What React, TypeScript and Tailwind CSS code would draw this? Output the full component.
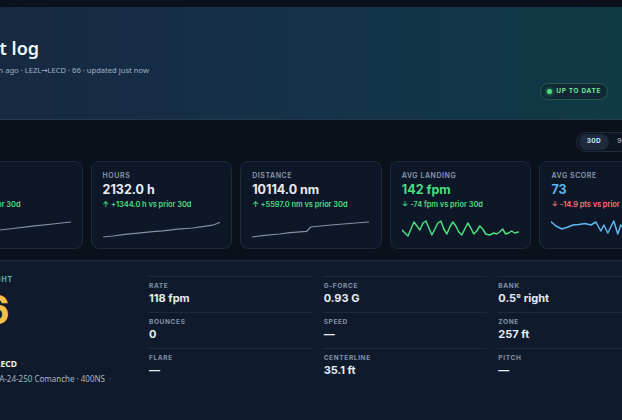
import React from "react";

type Stat = {
  label: string;
  value: string;
  delta: string;
  valueColor: string;
  deltaColor: string;
  spark: string;
  sparkColor: string;
  sparkWidth: number;
};

const stats: Stat[] = [
  {
    label: "FLIGHTS",
    value: "412",
    delta: "↑ +58 vs prior 30d",
    valueColor: "text-[#e8edf4]",
    deltaColor: "text-[#4ade80]",
    spark: "M0 18.3 L15 17 L30 15.5 L47 13 L60 11.5 L80 9.2 L100 7 L118 5",
    sparkColor: "#8091a8",
    sparkWidth: 1.2,
  },
  {
    label: "HOURS",
    value: "2132.0 h",
    delta: "↑ +1344.0 h vs prior 30d",
    valueColor: "text-[#e8edf4]",
    deltaColor: "text-[#4ade80]",
    spark: "M0 20 L10 19 L20 17.6 L35 16.2 L50 14.6 L60 13.8 L75 12.2 L90 11 L100 9.6 L110 8.2 L117 5.5",
    sparkColor: "#8091a8",
    sparkWidth: 1.2,
  },
  {
    label: "DISTANCE",
    value: "10114.0 nm",
    delta: "↑ +5597.0 nm vs prior 30d",
    valueColor: "text-[#e8edf4]",
    deltaColor: "text-[#4ade80]",
    spark: "M0 20 L10 18.7 L28 17 L38 15.7 L55 14.3 L57 12 L59 10 L79 8 L117 5",
    sparkColor: "#8091a8",
    sparkWidth: 1.2,
  },
  {
    label: "AVG LANDING",
    value: "142 fpm",
    delta: "↓ -74 fpm vs prior 30d",
    valueColor: "text-[#4ade80]",
    deltaColor: "text-[#4ade80]",
    spark:
      "M0 13 L3 16 L6 19 L9 12 L12 5 L15 9 L18 13 L21 6 L24 4 L27 11 L30 18 L33 12 L36 6 L39 4 L42 12 L45 17 L48 10 L51 5 L54 9 L57 15 L60 18 L63 12 L66 6 L69 11 L72 17 L75 14 L78 9 L81 12 L84 17 L88 18 L92 16 L95 17 L98 15 L101 12 L104 17 L107 16 L110 14 L113 16 L117 15",
    sparkColor: "#4ade80",
    sparkWidth: 1.5,
  },
  {
    label: "AVG SCORE",
    value: "73",
    delta: "↓ -14.9 pts vs prior 30d",
    valueColor: "text-[#5cb8f0]",
    deltaColor: "text-[#f87171]",
    spark:
      "M0 4.7 L5 9 L11 12 L17 10 L22 8 L28 7.5 L34 6.5 L40 8 L45 5 L50 14 L53 8 L57 16 L60 10 L63 4 L67 17 L70 8 L74 12 L78 6 L82 15 L86 9 L90 13 L95 7 L100 14 L105 10 L110 12 L117 9",
    sparkColor: "#5cb8f0",
    sparkWidth: 1.5,
  },
];

const metrics = [
  { label: "RATE", value: "118 fpm" },
  { label: "G-FORCE", value: "0.93 G" },
  { label: "BANK", value: "0.5° right" },
  { label: "BOUNCES", value: "0" },
  { label: "SPEED", value: "—" },
  { label: "ZONE", value: "257 ft" },
  { label: "FLARE", value: "—" },
  { label: "CENTERLINE", value: "35.1 ft" },
  { label: "PITCH", value: "—" },
];

const ranges = ["30D", "90D", "ALL"];

const StatCard = ({ stat }: { stat: Stat }) => (
  <div className="h-[88px] rounded-lg border border-[#1d2a3b] bg-[#0e1727] px-[11px] pt-[9px]">
    <div className="text-[7px] font-semibold leading-[10px] tracking-[0.08em] text-[#8b9ab0]">
      {stat.label}
    </div>
    <div className={`text-[12.5px] font-bold leading-[18px] ${stat.valueColor}`}>
      {stat.value}
    </div>
    <div className={`text-[7.5px] font-semibold leading-[11px] tracking-[-0.01em] ${stat.deltaColor}`}>
      {stat.delta}
    </div>
    <svg
      className="mt-[7px] block h-[22px] w-full"
      viewBox="0 0 118 22"
      preserveAspectRatio="none"
      fill="none"
    >
      <path
        d={stat.spark}
        stroke={stat.sparkColor}
        strokeWidth={stat.sparkWidth}
        strokeLinejoin="round"
        strokeLinecap="round"
        vectorEffect="non-scaling-stroke"
      />
    </svg>
  </div>
);

export default function App() {
  return (
    <div className="h-[420px] w-[622px] overflow-hidden bg-[#0b111b] font-['Inter',sans-serif]">
      <div className="-ml-[83px] w-[788px] pt-[7px]">
        {/* hero */}
        <div className="flex h-[113px] justify-between border-b border-[#26394f] bg-gradient-to-r from-[#16273f] via-[#143249] to-[#0f3b45] px-6 pt-[29px] pb-[19px]">
          <div className="ml-[16px] font-['Noto_Sans','DejaVu_Sans',sans-serif]">
            <h1 className="text-[18px] font-semibold leading-[24px] text-[#f1f5f9]">
              Flight log
            </h1>
            <p className="mt-[4px] -ml-[2px] text-[7.6px] leading-[12px] text-[#a3b1c4]">
              Last flight 2 h ago · LEZL→LECD · 66 · updated just now
            </p>
          </div>
          <div className="mr-[73px] flex h-[17px] items-center gap-[4px] self-end rounded-full border border-[#2b5a4c] bg-[#0f2833] px-[6px]">
            <span className="h-[5px] w-[5px] rounded-full bg-[#4ade80] shadow-[0_0_4px_#4ade80]" />
            <span className="text-[6.5px] font-bold tracking-[0.1em] text-[#6ee79a]">
              UP TO DATE
            </span>
          </div>
        </div>

        <div className="px-6">
          {/* range toggle */}
          <div className="mt-[12px] flex justify-end">
            <div className="mr-[9px] flex h-[20px] items-center rounded-full border border-[#1f2c3d] bg-[#0d1522] p-[2px]">
              {ranges.map((r, i) => (
                <span
                  key={r}
                  className={`flex h-[16px] items-center rounded-full px-[8px] text-[6.5px] font-bold tracking-[0.06em] ${
                    i === 0 ? "bg-[#1c2a3c] text-[#dfe6ee]" : "text-[#8b9ab0]"
                  }`}
                >
                  {r}
                </span>
              ))}
            </div>
          </div>

          {/* stat cards */}
          <div className="mt-[9px] grid grid-cols-5 gap-2">
            {stats.map((s) => (
              <StatCard key={s.label} stat={s} />
            ))}
          </div>

          {/* last flight */}
          <div className="mt-[11px] grid h-[200px] grid-cols-[172px_1fr] gap-4 rounded-t-lg border-t border-[#1c2b40] bg-[#0f1b2d] px-[19px] pt-[15px]">
            <div className="font-['Noto_Sans','DejaVu_Sans',sans-serif]">
              <div className="-mt-[1px] font-['Inter',sans-serif] text-[7px] font-bold leading-[10px] tracking-[0.1em] text-[#5fb8ad]">
                LAST FLIGHT
              </div>
              <div className="mt-[5px] font-['Inter',sans-serif] text-[39px] font-bold leading-[40px] tracking-[-0.03em] text-[#f5c04a]">
                66
              </div>
              <div className="mt-[28px] pl-[5px] text-[8.5px] font-bold leading-[12px] text-[#e8edf4]">
                LEZL → LECD <span className="ml-[2px] font-normal text-[#4a5d75]">·</span>
              </div>
              <div className="mt-[3px] pl-[13px] text-[8px] leading-[12px] text-[#aab5c4]">
                Piper PA-24-250 Comanche · 400NS <span className="ml-[2px] text-[#4a5d75]">·</span>
              </div>
            </div>
            <div className="grid grid-cols-3 content-start gap-x-[10px]">
              {metrics.map((m) => (
                <div key={m.label} className="border-t border-[#1c2a3c] pt-[4px] pb-[7px] pl-px">
                  <div className="text-[6.5px] font-bold leading-[10px] tracking-[0.1em] text-[#8393a8]">
                    {m.label}
                  </div>
                  <div className="text-[11px] font-bold leading-[14px] text-[#e6ebf2]">
                    {m.value}
                  </div>
                </div>
              ))}
            </div>
          </div>
        </div>
      </div>
    </div>
  );
}
